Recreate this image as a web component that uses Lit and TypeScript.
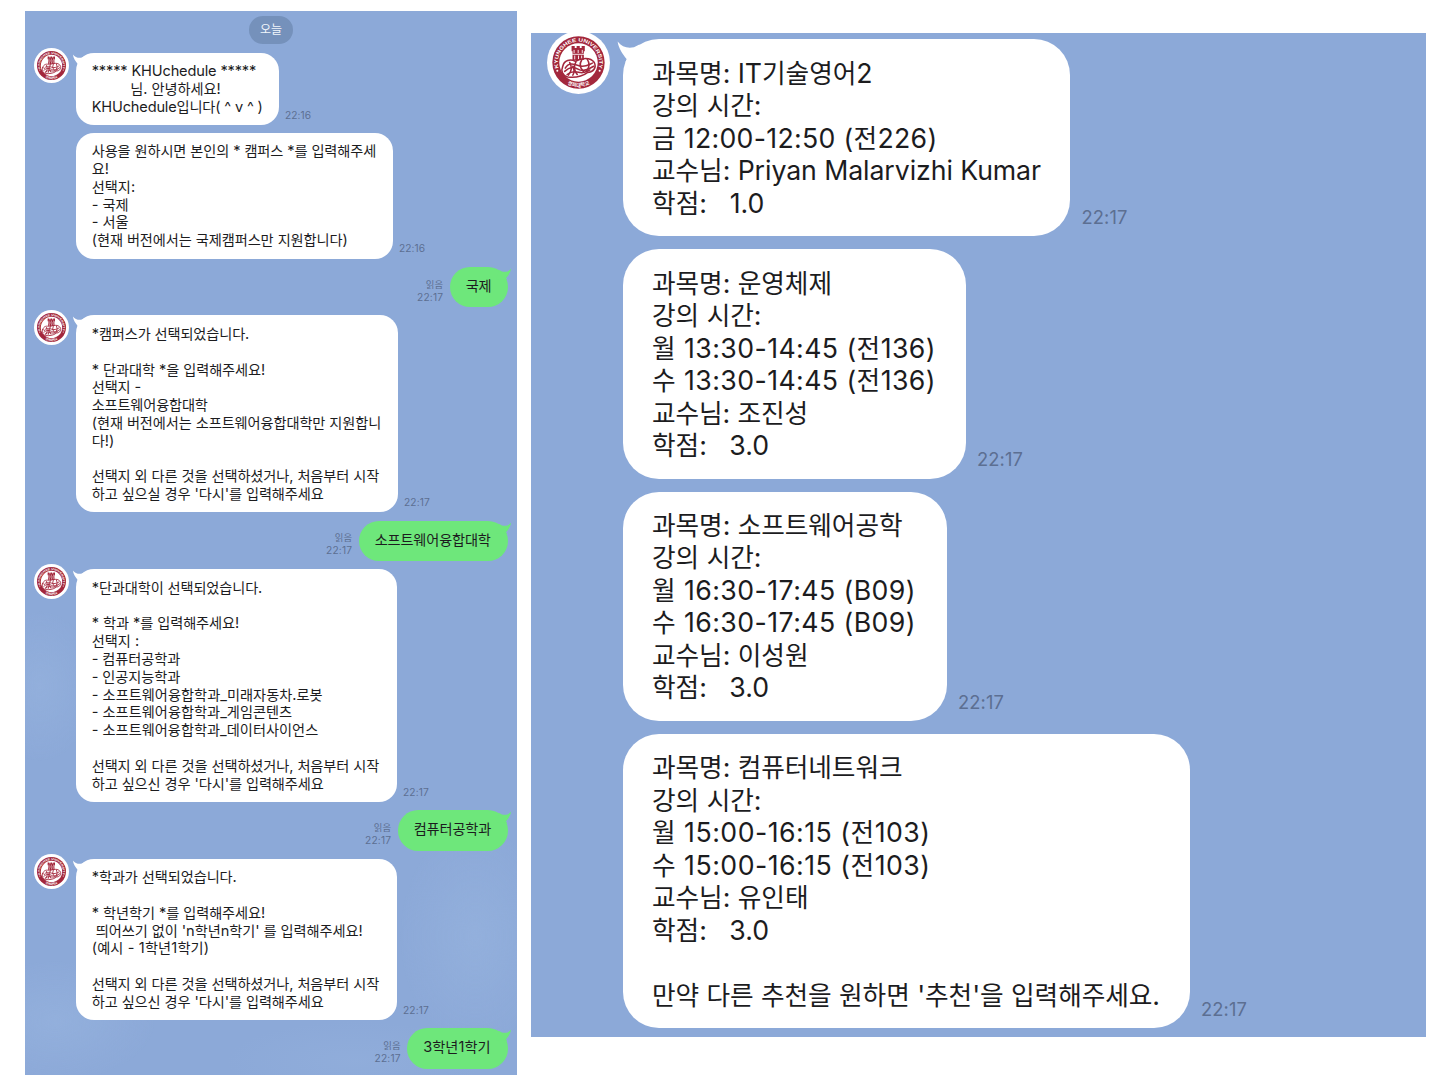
import { LitElement, html, css, svg } from "lit";
import { customElement, property } from "lit/decorators.js";

/** A line of message text: content, drawn width in px, optional indent in px. */
type Line = [text: string, width?: number, indent?: number];

interface Message {
  from: "bot" | "me";
  lines: Line[];
  width: number;
  time: string;
  avatar?: boolean;
}

const LATIN = /([\u0000-\u024f]+)/;

@customElement("fit-line")
class FitLine extends LitElement {
  @property() text = "";
  @property({ type: Number }) width = 0;
  @property({ type: Number }) indent = 0;

  static styles = css`
    :host { display: block; white-space: pre; height: var(--line); line-height: var(--line); }
    .latin { font-size: var(--latin-size); }
  `;

  // Spreads the difference between natural and wanted width over the letters.
  protected updated() {
    const run = this.renderRoot.querySelector(".run") as HTMLElement | null;
    if (!run || !this.width || !this.text) return;
    run.style.letterSpacing = "0px";
    const natural = run.getBoundingClientRect().width;
    run.style.letterSpacing = `${(this.width - natural) / this.text.length}px`;
  }

  render() {
    const parts = this.text.split(LATIN).filter((p) => p.length);
    return html`<span class="run" style="margin-left:${this.indent}px">${parts.map(
      (p) => (LATIN.test(p) ? html`<span class="latin">${p}</span>` : html`<span>${p}</span>`)
    )}</span>`;
  }
}

@customElement("univ-emblem")
class UnivEmblem extends LitElement {
  static styles = css`
    :host { display: block; }
    .emblem { display: block; width: 100%; height: 100%; }
    .ring { font-family: "Liberation Sans", sans-serif; font-weight: 700; font-size: 8px; fill: #fff; }
    .ring-ko { font-family: "Noto Sans CJK KR", sans-serif; font-weight: 700; font-size: 8px; fill: #fff; }
  `;

  render() {
    return html`<svg class="emblem" viewBox="-50 -50 100 100">
      ${svg`
      <defs>
        <path id="top" d="M-32.2 6 A32.8 32.8 0 1 1 32.2 6"/>
        <path id="bottom" d="M-30 24.2 A38.5 38.5 0 0 0 30 24.2"/>
      </defs>
      <circle r="50" fill="#fff"/>
      <circle r="41.5" fill="#a3273c"/>
      <circle r="30.5" fill="#fff"/>
      <text class="ring"><textPath href="#top" startOffset="50%" text-anchor="middle" textLength="122" lengthAdjust="spacingAndGlyphs">KYUNGHEE UNIVERSITY</textPath></text>
      <text class="ring-ko"><textPath href="#bottom" startOffset="50%" text-anchor="middle">경희대학교</textPath></text>
      <circle cx="-33.6" cy="13" r="1.6" fill="#fff"/>
      <circle cx="33.6" cy="13" r="1.6" fill="#fff"/>
      <g fill="#a3273c">
        <path d="M-11 -26 h5 v3 h3 v-3 h5 v3 h3 v-3 h5 v8 h-1.5 v14 h-18 v-14 h-1.5z"/>
      </g>
      <g fill="none" stroke="#fff" stroke-width="1.4">
        <path d="M-7 -20 v5 M-.5 -20 v5 M6 -20 v5 M-10 -13 h19 M-6 -11 v6 M0 -11 v6 M5 -11 v6"/>
      </g>
      <g fill="none" stroke="#a3273c" stroke-width="2.5" stroke-linecap="round" stroke-linejoin="round">
        <path d="M-25 6 C-23 -4 -13 -6 -5 -2 C4 -7 19 -9 25 0 C29 8 24 15 14 16 C5 23 -7 24 -17 23 C-26 21 -28 13 -25 6z"/>
        <path d="M-21 9 C-16 0 -8 2 1 5 S15 4 22 1"/>
        <path d="M-22 14 C-13 6 -7 7 0 11 S16 11 24 6"/>
        <path d="M-18 19 C-10 12 -3 15 3 16 S13 14 18 12"/>
        <path d="M-14 0 q6 10 -2 20 M-4 -1 q-6 10 2 20 M5 -4 q-6 10 3 18 M14 -5 q6 9 -1 18 M-9 6 q4 8 0 14"/>
      </g>`}
    </svg>`;
  }
}

@customElement("chat-message")
class ChatMessage extends LitElement {
  @property({ attribute: false }) message!: Message;

  static styles = css`
    :host { display: block; }
    .row { display: flex; align-items: flex-end; position: relative; }
    .bot { padding-left: var(--inset); }
    .me { flex-direction: row-reverse; padding-right: 9px; }
    .avatar { position: absolute; left: var(--avatar-x); top: var(--avatar-y); width: var(--avatar); height: var(--avatar); }
    .bubble {
      position: relative; box-sizing: border-box; flex: none;
      background: #fff; border-radius: var(--radius); padding: var(--pad-y) 0 var(--pad-y) var(--pad-x);
    }
    .me .bubble { background: #6ee77b; height: 40.5px; border-radius: 20.25px; padding: 10px 0 0 16px; }
    .tail { position: absolute; left: calc(-4 * var(--u)); top: 0; width: calc(16 * var(--u)); height: calc(16 * var(--u)); overflow: visible; }
    .me .tail { left: auto; right: -4px; transform: scaleX(-1); }
    .meta {
      color: #5c6f92; font-size: calc(9.4 * var(--u)); --latin-size: calc(10.2 * var(--u)); --line: calc(12 * var(--u));
      margin-left: var(--meta-gap); margin-bottom: var(--meta-bottom); text-align: right;
    }
    .me .meta { margin: 0 6.6px 4.6px 0; }
  `;

  render() {
    const m = this.message;
    const big = this.hasAttribute("large");
    return html`<div class="row ${m.from}">
      ${m.avatar ? html`<univ-emblem class="avatar"></univ-emblem>` : ""}
      <div class="bubble" style="width:${m.width}px">
        ${m.avatar || m.from === "me"
          ? html`<svg class="tail" viewBox="-4 0 16 16">
              <path fill=${m.from === "me" ? "#6ee77b" : "#fff"}
                d="M-3.1 1.4 C-0.8 4.4 2.3 5.4 6 4.6 L9 3 L12 12 L1.2 13 L2 11.2 C-0.5 8.3 -2.6 5 -3.1 1.4z"/>
            </svg>`
          : ""}
        ${m.lines.map(([t, w, i]) => html`<fit-line .text=${t} .width=${w ?? 0} .indent=${i ?? 0}></fit-line>`)}
      </div>
      <div class="meta">
        ${m.from === "me" ? html`<fit-line .text=${"읽음"}></fit-line>` : ""}
        <fit-line .text=${m.time} .width=${big ? 46 : 26}></fit-line>
      </div>
    </div>`;
  }
}

const retry = (word: string): Line[] => [
  ["", 0],
  ["선택지 외 다른 것을 선택하셨거나, 처음부터 시작", 287.5],
  [`하고 싶으${word} 경우 '다시'를 입력해주세요`, 232],
];

const LEFT: Message[] = [
  {
    from: "bot", avatar: true, width: 203, time: "22:16",
    lines: [["***** KHUchedule *****", 164.5], ["님. 안녕하세요!", 90.5, 38.5], ["KHUchedule입니다( ^ v ^ )", 171]],
  },
  {
    from: "bot", width: 317, time: "22:16",
    lines: [
      ["사용을 원하시면 본인의 * 캠퍼스 *를 입력해주세", 284.5], ["요!", 17.5], ["선택지:", 43.5],
      ["- 국제", 37], ["- 서울", 37], ["(현재 버전에서는 국제캠퍼스만 지원합니다)", 256],
    ],
  },
  { from: "me", width: 58.5, time: "22:17", lines: [["국제", 25.8]] },
  {
    from: "bot", avatar: true, width: 322, time: "22:17",
    lines: [
      ["*캠퍼스가 선택되었습니다.", 157.5], ["", 0], ["* 단과대학 *을 입력해주세요!", 173.5], ["선택지 -", 49.5],
      ["소프트웨어융합대학", 116], ["(현재 버전에서는 소프트웨어융합대학만 지원합니", 289.5], ["다!)", 22.5],
      ...retry("실"),
    ],
  },
  { from: "me", width: 149.5, time: "22:17", lines: [["소프트웨어융합대학", 116]] },
  {
    from: "bot", avatar: true, width: 321, time: "22:17",
    lines: [
      ["*단과대학이 선택되었습니다.", 170.5], ["", 0], ["* 학과 *를 입력해주세요!", 147.5], ["선택지 :", 47.5],
      ["- 컴퓨터공학과", 88.5], ["- 인공지능학과", 88.5], ["- 소프트웨어융합학과_미래자동차.로봇", 231],
      ["- 소프트웨어융합학과_게임콘텐츠", 200.5], ["- 소프트웨어융합학과_데이터사이언스", 226.5],
      ...retry("신"),
    ],
  },
  { from: "me", width: 110.5, time: "22:17", lines: [["컴퓨터공학과", 77.5]] },
  {
    from: "bot", avatar: true, width: 321, time: "22:17",
    lines: [
      ["*학과가 선택되었습니다.", 145], ["", 0], ["* 학년학기 *를 입력해주세요!", 173.5],
      [" 띄어쓰기 없이 'n학년n학기' 를 입력해주세요!", 271], ["(예시 - 1학년1학기)", 117.5],
      ...retry("신"),
    ],
  },
  { from: "me", width: 101, time: "22:17", lines: [["3학년1학기", 67.5]] },
];

const course = (name: Line, times: Line[], prof: Line, credit: Line): Line[] => [
  name, ["강의 시간:", 109.5], ...times, prof, credit,
];

const RIGHT: Message[] = [
  {
    from: "bot", avatar: true, width: 447.5, time: "22:17",
    lines: course(["과목명: IT기술영어2", 220.5], [["금 12:00-12:50 (전226)", 285.5]], ["교수님: Priyan Malarvizhi Kumar", 389], ["학점:   1.0", 112.5]),
  },
  {
    from: "bot", width: 343, time: "22:17",
    lines: course(["과목명: 운영체제", 180], [["월 13:30-14:45 (전136)", 284], ["수 13:30-14:45 (전136)", 284]], ["교수님: 조진성", 156], ["학점:   3.0", 117]),
  },
  {
    from: "bot", width: 324, time: "22:17",
    lines: course(["과목명: 소프트웨어공학", 250.5], [["월 16:30-17:45 (B09)", 264], ["수 16:30-17:45 (B09)", 264]], ["교수님: 이성원", 156.5], ["학점:   3.0", 117]),
  },
  {
    from: "bot", width: 567, time: "22:17",
    lines: [
      ...course(["과목명: 컴퓨터네트워크", 250.5], [["월 15:00-16:15 (전103)", 278.5], ["수 15:00-16:15 (전103)", 278.5]], ["교수님: 유인태", 156.5], ["학점:   3.0", 117]),
      ["", 0],
      ["만약 다른 추천을 원하면 '추천'을 입력해주세요.", 508],
    ],
  },
];

@customElement("app-root")
class AppRoot extends LitElement {
  static styles = css`
    :host {
      display: block; height: 1080px; overflow: hidden; background: #fff; color: #1c1c1e;
      font-family: Inter, "Noto Sans CJK KR", sans-serif;
    }
    .page { display: flex; align-items: flex-start; gap: 13.5px; padding: 11px 0 0 25px; }
    .panel { box-sizing: border-box; display: flex; flex-direction: column; background-color: #8ca9d8; }
    .left {
      width: 492.2px; height: 1064px; gap: 8.2px; padding-top: 5px;
      background-image:
        radial-gradient(ellipse 55px 75px at 15px 675px, rgba(160, 188, 228, 0.32), transparent),
        radial-gradient(ellipse 75px 110px at 450px 925px, rgba(160, 188, 228, 0.34), transparent),
        radial-gradient(ellipse 100px 60px at 30px 1010px, rgba(160, 188, 228, 0.34), transparent),
        radial-gradient(ellipse 130px 40px at 330px 1050px, rgba(160, 188, 228, 0.2), transparent);
      font-size: 14.2px; --latin-size: 14.6px; --line: 17.8px; --u: 1px;
      --inset: 51px; --radius: 18px; --pad-x: 15.7px; --pad-y: 9.5px;
      --avatar: 35px; --avatar-x: 9px; --avatar-y: -5px; --meta-gap: 6px; --meta-bottom: 4.2px;
    }
    .right {
      width: 895.5px; height: 1004px; gap: 13px; margin-top: 22.4px; padding-top: 6.1px;
      font-size: 25.7px; --latin-size: 26.7px; --line: 32.5px; --u: 1.8px;
      --inset: 92.3px; --radius: 36px; --pad-x: 29px; --pad-y: 17.2px;
      --avatar: 63px; --avatar-x: 16.6px; --avatar-y: -8.2px; --meta-gap: 11px; --meta-bottom: 7.8px;
    }
    .day {
      align-self: center; box-sizing: border-box; width: 44px; height: 28px; margin-bottom: 0.8px; border-radius: 14px;
      background: #7591bb; color: #f2f6fc; font-size: 12px; line-height: 27px; text-align: center;
    }
    .tight { margin-bottom: -0.8px; }
  `;

  render() {
    return html`<div class="page">
      <section class="panel left">
        <div class="day">오늘</div>
        ${LEFT.map((m, i) => html`<chat-message class=${i === 0 ? "tight" : ""} .message=${m}></chat-message>`)}
      </section>
      <section class="panel right">
        ${RIGHT.map((m) => html`<chat-message large .message=${m}></chat-message>`)}
      </section>
    </div>`;
  }
}
